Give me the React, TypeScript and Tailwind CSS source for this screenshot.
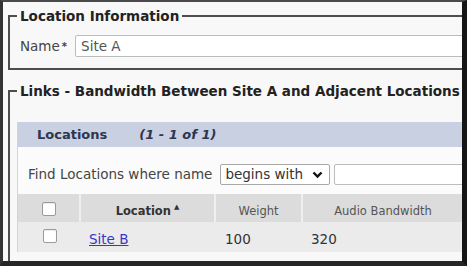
import React from "react";

const Checkbox = () => (
  <div className="w-[14px] h-[14px] border border-[#9a9a9a] rounded-[2px] bg-white shadow-[inset_0_1px_1px_rgba(0,0,0,0.08)]" />
);

const App = () => {
  return (
    <div className="w-[467px] h-[266px] overflow-hidden border-t-2 border-l-[3px] border-r-[5px] border-b-[5px] border-t-[#4a4a4a] border-l-[#333333] border-r-[#151515] border-b-[#262626] bg-[#f8f8f8] font-['DejaVu_Sans',sans-serif] text-[#333]">
      <div className="w-[560px] pl-[5px] pt-[6px]">
        {/* Location Information */}
        <fieldset className="border-2 border-[#4d4d4d] pl-[7px] pb-[11px]">
          <legend className="px-[3px] text-[13.5px] leading-[16px] font-bold text-[#222]">
            Location Information
          </legend>
          <div className="mt-[11px] flex items-center">
            <span className="ml-[3px] text-[13.5px] text-[#444]">
              Name<sup className="text-[10px] font-bold ml-[2px] relative -top-[1px]">*</sup>
            </span>
            <div className="ml-[8px] flex-1 h-[22px] flex items-center border border-[#bcbcbc] rounded-[2px] bg-white px-[5px] text-[13.5px] text-[#555]">
              Site A
            </div>
          </div>
        </fieldset>

        {/* Links - Bandwidth */}
        <fieldset className="mt-[13px] border-2 border-[#4d4d4d] pl-[7px] pb-[20px]">
          <legend className="px-[3px] text-[13.5px] leading-[16px] font-bold text-[#222]">
            Links - Bandwidth Between Site A and Adjacent Locations
          </legend>
          <div className="mt-[23px] border-l border-[#d4d4d4]">
            {/* header bar */}
            <div className="h-[25px] bg-[#c9d0e1] flex items-center pl-[19px] text-[13px] font-bold text-[#2d3550]">
              <span>Locations</span>
              <span className="ml-[32px] italic">(1 - 1 of 1)</span>
            </div>

            {/* find row */}
            <div className="pt-[17px] pb-[9px] pl-[10px] flex items-center bg-[#fbfbfb]">
              <span className="text-[13.5px] text-[#444] whitespace-nowrap">Find Locations where name</span>
              <div className="ml-[8px] w-[110px] h-[21px] border border-[#a8a8a8] rounded-[2px] bg-white flex items-center justify-between pl-[4px] pr-[6px] text-[13.5px] text-[#333]">
                <span>begins with</span>
                <svg width="11" height="8" viewBox="0 0 11 8">
                  <path d="M1.5 1.5 L5.5 5.5 L9.5 1.5" fill="none" stroke="#111" strokeWidth="2.4" />
                </svg>
              </div>
              <div className="ml-[4px] flex-1 h-[21px] border border-[#bcbcbc] rounded-[2px] bg-white" />
            </div>

            {/* table header */}
            <div className="flex h-[28px] bg-[#efefef] gap-[2px] text-[11.5px]">
              <div className="w-[61px] bg-[#dcdcdc] flex justify-center pt-[8px]">
                <Checkbox />
              </div>
              <div className="w-[133px] bg-[#dcdcdc] flex justify-center items-start pt-[10px] font-bold text-[#333] leading-[14px]">
                <span>Location</span>
                <span className="ml-[3px] text-[7px] leading-[8px] -mt-[1px]">▲</span>
              </div>
              <div className="w-[85px] bg-[#dcdcdc] flex justify-center pt-[10px] leading-[14px] text-[#555]">
                Weight
              </div>
              <div className="w-[160px] bg-[#dcdcdc] flex justify-center pt-[10px] leading-[14px] text-[#555]">
                Audio Bandwidth
              </div>
              <div className="flex-1 bg-[#dcdcdc]" />
            </div>

            {/* data row */}
            <div className="flex h-[30px] bg-[#ebebeb] text-[13.5px] text-[#333]">
              <div className="w-[63px] flex justify-center pt-[7px]">
                <Checkbox />
              </div>
              <div className="w-[135px] pl-[8px] pt-[9px] leading-[17px]">
                <a href="#" className="text-[#3a35c8] underline">Site B</a>
              </div>
              <div className="w-[87px] pl-[9px] pt-[9px] leading-[17px]">100</div>
              <div className="flex-1 pl-[8px] pt-[9px] leading-[17px]">320</div>
            </div>
          </div>
        </fieldset>
      </div>
    </div>
  );
};

export default App;
